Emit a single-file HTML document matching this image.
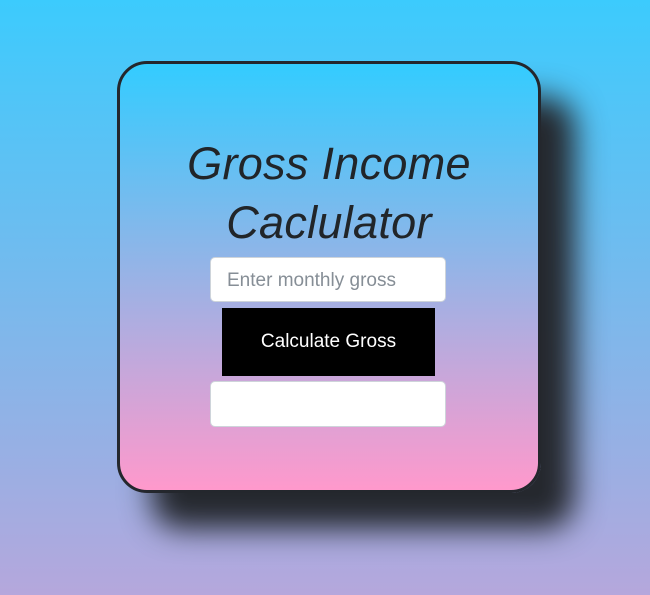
<!DOCTYPE html>
<html><head><style>
html,body{margin:0;padding:0;width:650px;height:595px;overflow:hidden}
body{background:linear-gradient(to bottom,#3ccbfd 0%,#b5a7dc 100%);font-family:"Liberation Sans",sans-serif;position:relative}
.card{position:absolute;left:117px;top:61px;width:418px;height:426px;border:3px solid #24272d;border-radius:30px;background:linear-gradient(to bottom,#33ccff,#ff99cc);box-shadow:34px 36px 30px #25282e}
h1{position:absolute;left:0;right:0;top:70px;margin:0;text-align:center;font-style:italic;font-weight:normal;font-size:45px;line-height:59px;color:#212529;letter-spacing:0.3px}
.in{position:absolute;left:90px;width:236px;height:45px;background:#fff;border:1px solid #ced4da;border-radius:5px;box-sizing:border-box}
.in span{position:absolute;left:16px;top:12px;font-size:19px;color:#868e96}
.btn{position:absolute;left:102px;top:244px;width:213px;height:68px;background:#000;color:#fff;font-size:19px;text-align:center;line-height:68px}
</style></head><body>
<div class="card">
<h1>Gross Income<br>Caclulator</h1>
<div class="in" style="top:193px"><span>Enter monthly gross</span></div>
<div class="btn">Calculate Gross</div>
<div class="in" style="top:317px;height:46px"></div>
</div>
</body></html>
